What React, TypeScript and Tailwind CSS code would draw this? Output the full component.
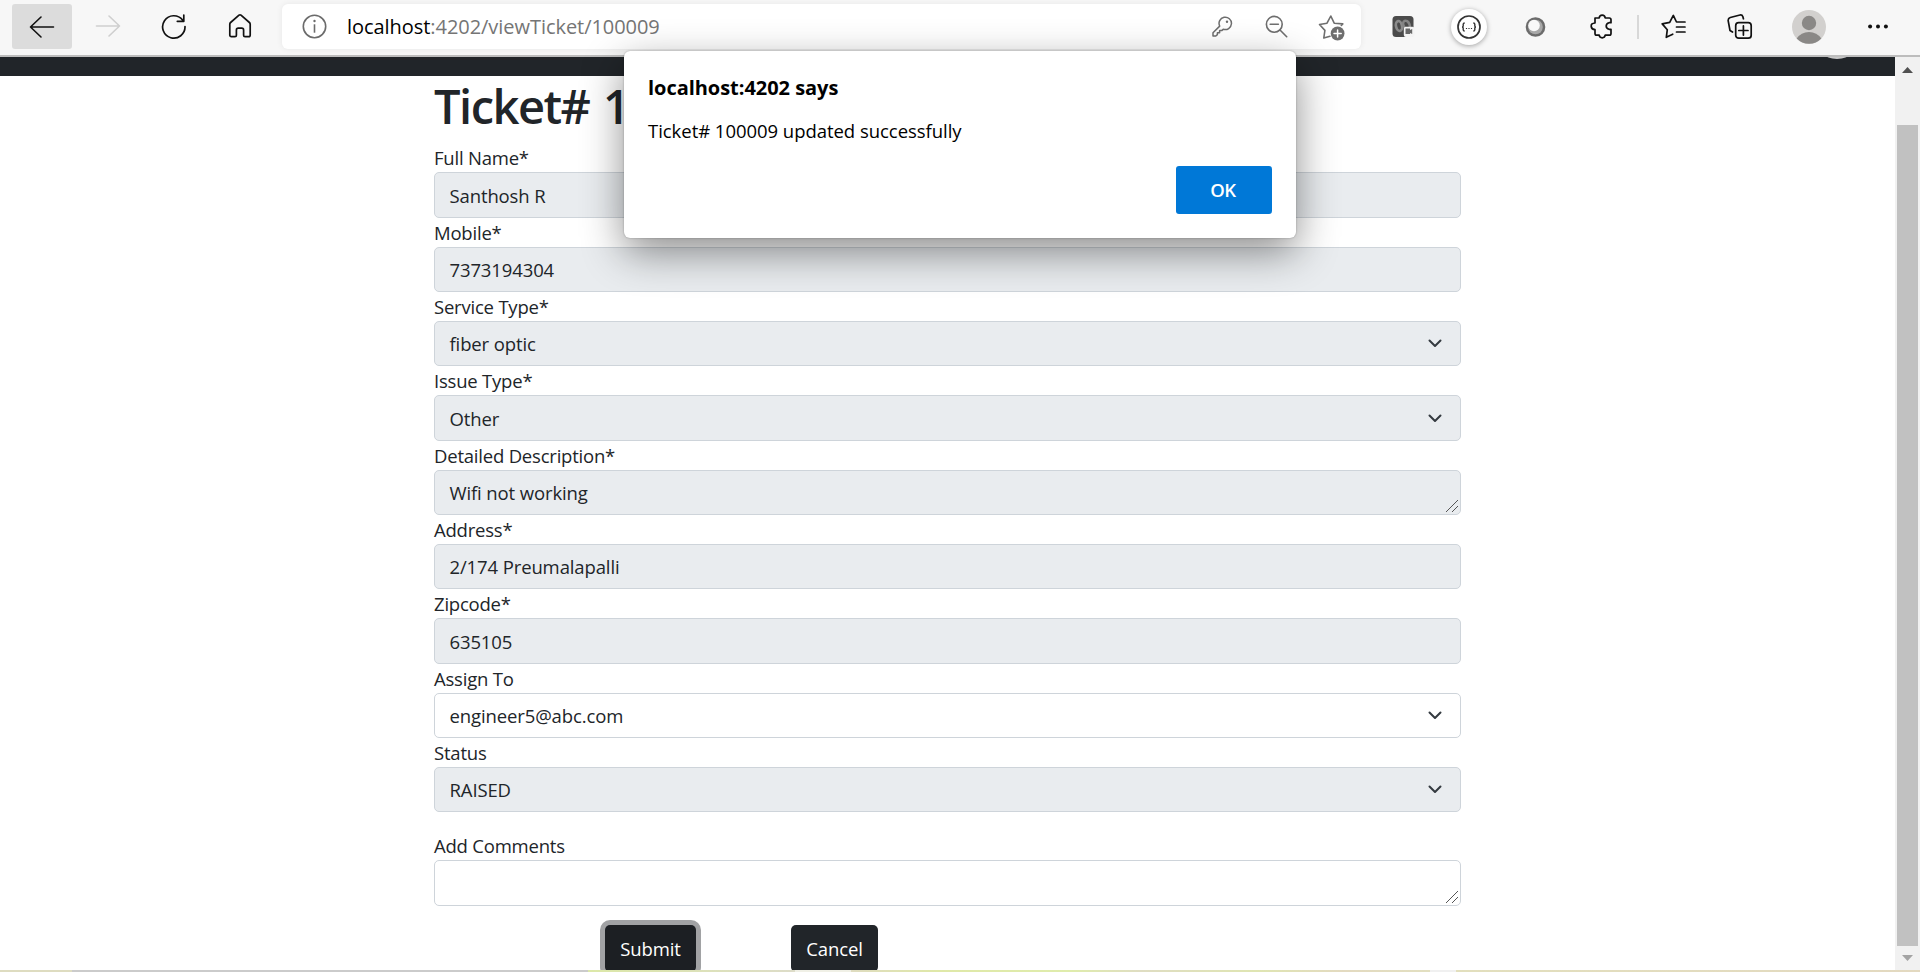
import React from "react";

type FieldProps = { label: string; value: string; box: string; kind?: "input" | "select" | "area" };

const fields: FieldProps[] = [
  { label: "Full Name*", value: "Santhosh R", box: "h-[46px] bg-[#e9ecef]" },
  { label: "Mobile*", value: "7373194304", box: "h-[45px] bg-[#e9ecef]" },
  { label: "Service Type*", value: "fiber optic", box: "h-[45px] bg-[#e9ecef]", kind: "select" },
  { label: "Issue Type*", value: "Other", box: "h-[46px] bg-[#e9ecef]", kind: "select" },
  { label: "Detailed Description*", value: "Wifi not working", box: "h-[45px] bg-[#e9ecef]", kind: "area" },
  { label: "Address*", value: "2/174 Preumalapalli", box: "h-[45px] bg-[#e9ecef]" },
  { label: "Zipcode*", value: "635105", box: "h-[46px] bg-[#e9ecef]" },
  { label: "Assign To", value: "engineer5@abc.com", box: "h-[45px] bg-white", kind: "select" },
  { label: "Status", value: "RAISED", box: "h-[45px] bg-[#e9ecef]", kind: "select" },
];

function Chevron() {
  return (
    <svg className="mr-[18px] shrink-0" width="14" height="9" viewBox="0 0 14 9" fill="none" stroke="#343a40" strokeWidth="2" strokeLinecap="round" strokeLinejoin="round">
      <path d="M1.5 1.5 7 7 12.5 1.5" />
    </svg>
  );
}

function Grip() {
  return (
    <svg className="mr-[2px] mb-px shrink-0 self-end" width="13" height="13" viewBox="0 0 13 13" stroke="#555" strokeWidth="1" shapeRendering="crispEdges">
      <path d="M0.5 12.5 12.5 0.5M6.5 12.5 12.5 6.5" />
    </svg>
  );
}

function Field({ label, value, box, kind = "input" }: FieldProps) {
  return (
    <div>
      <div className="h-[29px] leading-[30px] tracking-[-0.21px]">{label}</div>
      <div className={`flex items-center justify-between rounded-[5px] border border-[#ced4da] pl-[14.5px] ${box}`}>
        <span className="pt-px">{value}</span>
        {kind === "select" && <Chevron />}
        {kind === "area" && <Grip />}
      </div>
    </div>
  );
}

function Toolbar() {
  return (
    <div className="flex h-[55px] shrink-0 bg-[#f7f7f7]">
      <div className="mt-1 ml-3 flex h-[45px] w-[60px] items-center justify-center rounded-[3px] bg-[#dcdcdc]">
        <svg width="26" height="24" viewBox="0 0 26 24" fill="none" stroke="#111" strokeWidth="1.6" strokeLinecap="round" strokeLinejoin="round">
          <path d="M24.5 12H1.5M12 2 1.5 12 12 22" />
        </svg>
      </div>
      <svg className="mt-[14px] ml-[23px]" width="26" height="24" viewBox="0 0 26 24" fill="none" stroke="#cfcfcf" strokeWidth="1.6" strokeLinecap="round" strokeLinejoin="round">
        <path d="M1.5 12h23M14 2l10.5 10L14 22" />
      </svg>
      <svg className="mt-[13px] ml-[40px]" width="26" height="27" viewBox="0 0 26 27" fill="none" stroke="#111" strokeWidth="1.7" strokeLinecap="round" strokeLinejoin="round">
        <path d="M24 13.5A11.2 11.2 0 1 1 21.6 7M22.8 2v6.3h-6.5" />
      </svg>
      <svg className="mt-[13px] ml-[41px]" width="24" height="26" viewBox="0 0 24 26" fill="none" stroke="#111" strokeWidth="1.7" strokeLinejoin="round">
        <path d="M1.8 11.2Q1.8 10.2 2.6 9.5L11 2.2Q12 1.4 13 2.2L21.4 9.5Q22.2 10.2 22.2 11.2V22Q22.2 23.7 20.6 23.7H17Q15.6 23.7 15.6 22.3V17Q15.6 15.1 13.8 15.1H10.2Q8.4 15.1 8.4 17V22.3Q8.4 23.7 7 23.7H3.4Q1.8 23.7 1.8 22Z" />
      </svg>

      <div className="mt-1 ml-[30px] flex h-[45px] w-[1079px] items-center rounded-[6px] bg-white shadow-[0_0_6px_rgba(0,0,0,0.07)]">
        <svg className="ml-[20px]" width="25" height="25" viewBox="0 0 25 25" fill="none" stroke="#6b6b6b" strokeWidth="1.6">
          <circle cx="12.5" cy="12.5" r="11.2" />
          <path d="M12.5 10.3v8.4" />
          <circle cx="12.5" cy="7" r="1.2" fill="#6b6b6b" stroke="none" />
        </svg>
        <div className="ml-[20px] text-[20px] tracking-[-0.05px] whitespace-nowrap text-[#757575]">
          <span className="text-black">localhost</span>:4202/viewTicket/100009
        </div>
        <div className="ml-auto flex items-center">
          <svg width="21" height="21" viewBox="0 0 21 21" fill="none" stroke="#6e6e6e" strokeWidth="1.5" strokeLinejoin="round">
            <path d="M7.7 10.1A6.2 6.2 0 1 1 11.2 13.2L10 14.4H7.6V16.8H5.4V18.6L3.8 20H1V16.8Z" />
            <circle cx="15" cy="5.8" r="1.2" fill="#6e6e6e" stroke="none" />
          </svg>
          <svg className="ml-[32px]" width="23" height="23" viewBox="0 0 23 23" fill="none" stroke="#6e6e6e" strokeWidth="1.6" strokeLinecap="round">
            <circle cx="9.3" cy="9.3" r="7.9" />
            <path d="M5.2 9.3h8.2M15 15l6.7 6.7" />
          </svg>
          <svg className="mt-px mr-[15px] ml-[30px]" width="28" height="27" viewBox="0 0 28 27" fill="none" stroke="#6e6e6e" strokeWidth="1.6" strokeLinejoin="round" strokeLinecap="round">
            <path d="M12 22.2 5.8 24 6.9 16.4 1.5 10.5 9 9.2 12.8 2 16.2 9.2 24.8 9.9 23.3 11.5" />
            <circle cx="19.6" cy="19.5" r="6.9" fill="#6e6e6e" stroke="none" />
            <path d="M16 19.5h7.2M19.6 15.9v7.2" stroke="#fff" strokeWidth="1.5" />
          </svg>
        </div>
      </div>

      <svg className="mt-[15px] ml-[31px]" width="23" height="23" viewBox="0 0 23 23">
        <rect x="0.5" y="1" width="21" height="21" rx="3.5" fill="#4b4b4b" />
        <ellipse cx="7" cy="11" rx="3" ry="5" fill="none" stroke="#8b8b8b" strokeWidth="2.6" transform="rotate(-12 7 11)" />
        <ellipse cx="14.500" cy="10" rx="3" ry="4.500" fill="none" stroke="#858585" strokeWidth="2.600" transform="rotate(-25 14.500 10)" />
        <rect x="11.8" y="11.8" width="10.7" height="10.2" rx="2" fill="#f4f4f4" />
        <path d="M13.5 13.5h4.5v1.500l2.200-1v5l-2.200-1v1h-4.500z" fill="#686868" />
      </svg>
      <div className="mt-[9px] ml-[36px] flex h-9 w-9 items-center justify-center rounded-full bg-white shadow-[0_1px_5px_rgba(0,0,0,0.35)]">
        <svg width="24" height="24" viewBox="0 0 24 24" fill="none" stroke="#333" strokeWidth="1.7">
          <circle cx="12" cy="12" r="11" />
          <path d="M7.7 8Q6.200 8 6.200 9.300V10.900Q6.200 12 5 12Q6.200 12 6.200 13.100V14.700Q6.200 16 7.700 16M16.300 8Q17.800 8 17.800 9.300V10.900Q17.800 12 19 12Q17.800 12 17.800 13.100V14.700Q17.800 16 16.300 16" strokeWidth="1.4" />
          <path d="M8.900 13.5h1.200M11.400 13.5h1.200M13.900 13.5h1.200" strokeWidth="1.1" />
        </svg>
      </div>
      <svg className="mt-[17px] ml-[38px]" width="21" height="21" viewBox="0 0 21 21">
        <circle cx="10.5" cy="10" r="9.8" fill="#6c6c6c" />
        <circle cx="10.5" cy="10" r="7.3" fill="#a8a8a8" />
        <circle cx="9" cy="8.5" r="5.8" fill="#f8f8f8" />
      </svg>
      <svg className="mt-[14px] ml-[44px]" width="23" height="25" viewBox="0 0 23 25" fill="none" stroke="#111" strokeWidth="1.7" strokeLinejoin="round">
        <path d="M5 4H9.2Q9.5 1.2 12.2 1.2T15.2 4H19.3Q21 4 21 5.7V8.7H19Q16.2 9.5 16.2 12T19 15.3H21V19.5Q21 21.2 19.3 21.2H15.2Q14.8 23.8 12.2 23.8T9.2 21.2H6.7Q5 21.2 5 19.5V15.7Q1.5 15.3 1.2 12.3T5 9Z" />
      </svg>
      <div className="mt-[15px] ml-[24px] h-6 w-[2px] bg-[#d8d8d8]" />
      <svg className="mt-[14px] ml-[22px]" width="25" height="25" viewBox="0 0 25 25" fill="none" stroke="#111" strokeWidth="1.7" strokeLinejoin="round" strokeLinecap="round">
        <path d="M17 8H15.5L12.3 1.4 8.7 8.3 1.2 9.9 6.3 15.7 5.3 23.3 11.7 20.2M15.5 13h8.5M15.5 18h8.5M17 8h7" />
      </svg>
      <svg className="mt-[13px] ml-[41px]" width="26" height="27" viewBox="0 0 26 27" fill="none" stroke="#111" strokeWidth="1.7" strokeLinejoin="round" strokeLinecap="round">
        <path d="M5.5 19 3 17.5 1.2 7.8Q.9 5.3 3.3 4.5L13 2Q15.2 1.7 15.9 3.8L16.4 5.8" />
        <rect x="8.7" y="9.7" width="15.5" height="15.5" rx="3" />
        <path d="M11.8 17.5h9.2M16.4 12.9v9.2" />
      </svg>
      <svg className="mt-[10px] ml-[39px]" width="34" height="34" viewBox="0 0 34 34">
        <circle cx="17" cy="17" r="17" fill="#d2d0ce" />
        <circle cx="17" cy="13" r="7.2" fill="#8a8886" />
        <path d="M4.7 28.6Q9 22 17 22T29.3 28.6A17 17 0 0 1 4.7 28.6Z" fill="#8a8886" />
      </svg>
      <svg className="mt-[24px] ml-[42px]" width="20" height="5" viewBox="0 0 20 5" fill="#111">
        <circle cx="2.1" cy="2.5" r="2" />
        <circle cx="10" cy="2.5" r="2" />
        <circle cx="17.9" cy="2.5" r="2" />
      </svg>
    </div>
  );
}

export default function App() {
  return (
    <div className="relative flex h-[972px] w-[1920px] flex-col overflow-hidden bg-white font-['Open_Sans','Noto_Sans',sans-serif] text-[18.5px] tracking-[-0.12px] text-[#212529]">
      <Toolbar />
      <div className="h-[2px] shrink-0 bg-[#bdbdbd]" />
      <div className="flex h-[913px] shrink-0">
        <main className="w-[1895px] overflow-hidden">
          <div className="flex h-[19px] justify-end overflow-hidden bg-[#212529]">
            <svg className="mr-[48px]" width="20" height="3" viewBox="0 0 20 3">
              <ellipse cx="10" cy="-3" rx="12" ry="5" fill="#c8c8c8" />
            </svg>
          </div>
          <div className="ml-[434px] w-[1027px]">
            <h1 className="flex h-[67px] pt-px text-[47px] leading-[58px] font-semibold tracking-[-1.5px]">
              <span className="w-[169px] whitespace-pre">Ticket# </span>
              <span>1</span>
            </h1>
            {fields.map((f) => (
              <Field key={f.label} {...f} />
            ))}
            <div className="h-[19px]" />
            <Field label="Add Comments" value="" box="h-[46px] bg-white" kind="area" />
            <div className="flex pt-[19px] pl-[171px] text-white">
              <button className="h-[47px] w-[91px] rounded-[5px] bg-[#1c1f23] pt-px shadow-[0_0_0_5px_#a1a2a4]">Submit</button>
              <button className="ml-[95px] h-[47px] w-[87px] rounded-[5px] bg-[#212529] pt-px">Cancel</button>
            </div>
          </div>
        </main>
        <div className="flex w-[25px] flex-col items-center bg-[#f1f1f1]">
          <svg className="mt-[10px]" width="11" height="6" viewBox="0 0 11 6">
            <path d="M0 6 5.5 0 11 6Z" fill="#505050" />
          </svg>
          <div className="mt-[52px] h-[821px] w-[21px] bg-[#c1c1c1]" />
          <svg className="mt-[9px]" width="11" height="6" viewBox="0 0 11 6">
            <path d="M0 0h11L5.5 6Z" fill="#a3a3a3" />
          </svg>
        </div>
      </div>
      <div className="flex h-[2px] shrink-0">
        <div className="w-[72px] bg-[#dedcc0]" />
        <div className="w-[516px] bg-[#cbcbcb]" />
        <div className="w-[207px] bg-[linear-gradient(90deg,#dce8a8,#dddcc8)]" />
        <div className="w-[56px] bg-[#f0f0e6]" />
        <div className="w-[579px] bg-[linear-gradient(90deg,#dfdcc0,#dfe8a8_15%,#dfecac_38%,#dfddc2_50%,#dfe5b2_70%,#e3dac0_85%,#e2dfc0)]" />
        <div className="w-[26px] bg-[#f0f0f0]" />
        <div className="flex-1 bg-[linear-gradient(90deg,#e2dfbd,#e3d9c0)]" />
      </div>

      <div className="absolute top-[51px] left-[624px] flex h-[187px] w-[672px] flex-col rounded-[6px] bg-white px-6 text-black shadow-[0_0_2px_rgba(0,0,0,0.3),0_14px_42px_rgba(0,0,0,0.45)]">
        <div className="mt-[22px] h-[30px] text-[20px] leading-[30px] font-bold tracking-[-0.04px]">localhost:4202 says</div>
        <div className="mt-[12px] h-[30px] leading-[31px] tracking-[-0.04px]">Ticket# 100009 updated successfully</div>
        <button className="mt-[21px] h-12 w-24 self-end rounded-[3px] bg-[#0078d7] pr-[2px] pb-px font-semibold tracking-[-0.5px] text-white">OK</button>
      </div>
    </div>
  );
}
